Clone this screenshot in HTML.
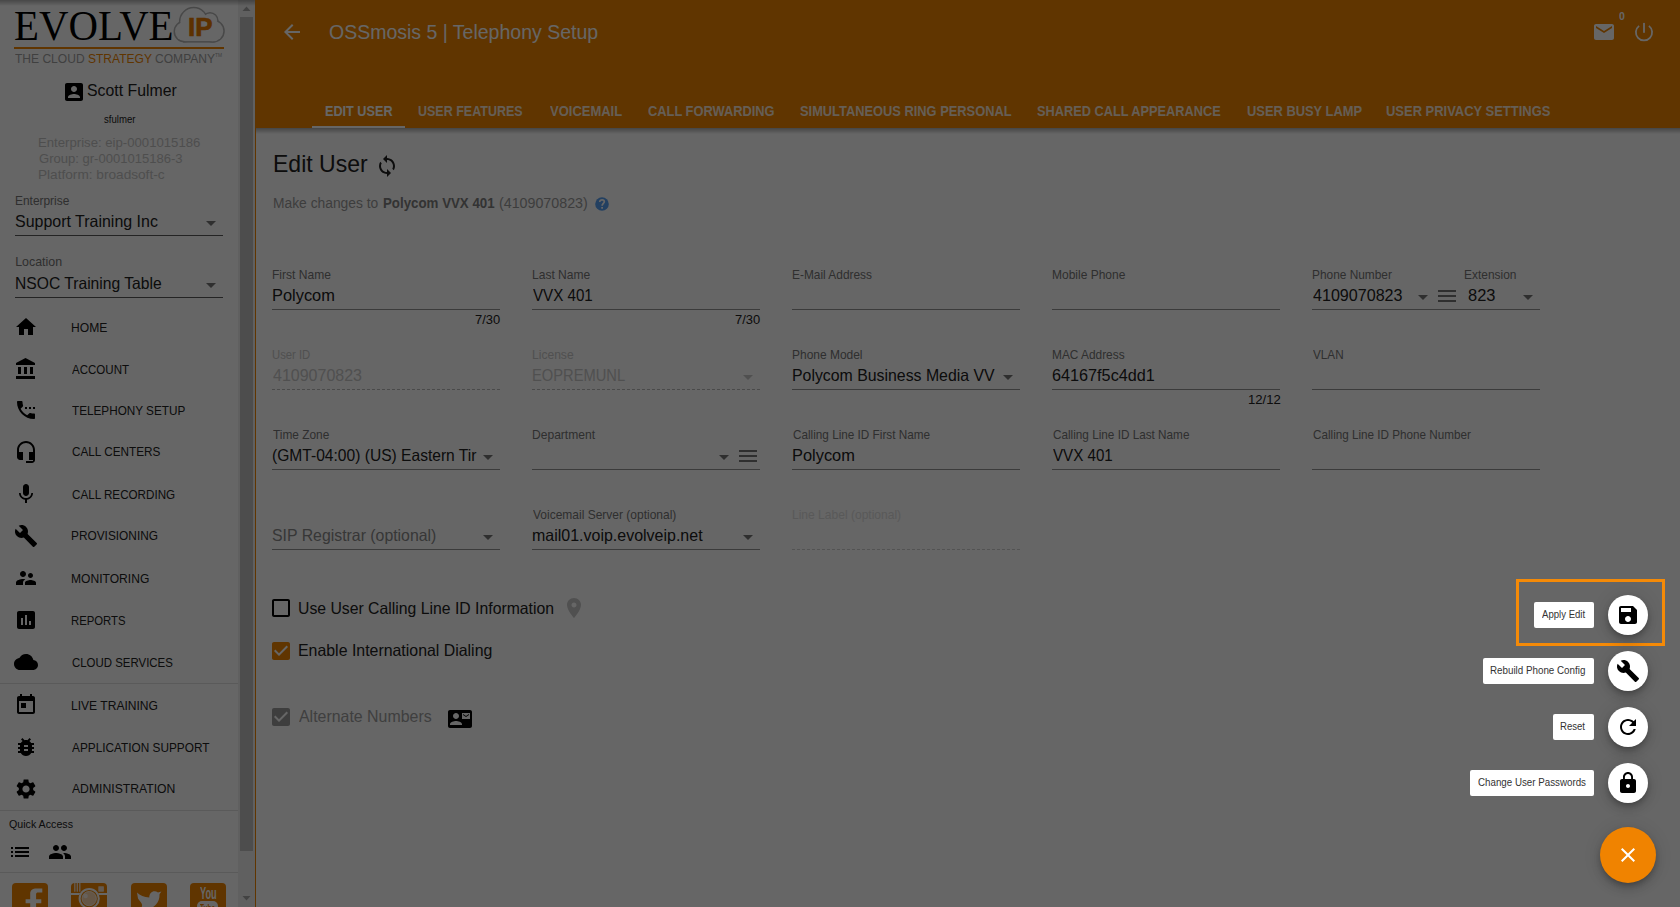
<!DOCTYPE html>
<html><head><meta charset="utf-8"><style>
html,body{margin:0;padding:0;width:1680px;height:907px;overflow:hidden;background:#fff;font-family:"Liberation Sans",sans-serif;}
.t{position:absolute;white-space:nowrap;line-height:1;transform-origin:0 0;}
.r{position:absolute;}
.i{position:absolute;overflow:visible;}
</style></head><body>
<div class="r" style="left:0px;top:0px;width:1680px;height:907px;background:#fff;"></div>
<div class="r" style="left:255px;top:0px;width:1425px;height:128px;background:#f08400;"></div>
<div class="r" style="left:256px;top:128px;width:1424px;height:6px;background:linear-gradient(rgba(0,0,0,.32),rgba(0,0,0,0));"></div>
<div class="r" style="left:255px;top:128px;width:1px;height:779px;background:#f08400;"></div>
<div class="r" style="left:238px;top:0px;width:17px;height:907px;background:#f1f1f1;"></div>
<div class="r" style="left:240px;top:17px;width:13px;height:834px;background:#c1c1c1;"></div>
<svg class="i" style="left:238px;top:0;width:17px;height:17px" viewBox="0 0 17 17"><path d="M4.5 11h8L8.5 6.5z" fill="#a8a8a8"/></svg>
<div class="r" style="left:0px;top:0px;width:255px;height:6px;background:linear-gradient(rgba(0,0,0,.3),rgba(0,0,0,0));"></div>
<svg class="i" style="left:238px;top:890px;width:17px;height:17px" viewBox="0 0 17 17"><path d="M4.5 6h8L8.5 10.5z" fill="#a8a8a8"/></svg>
<div class="t" style="left:13.57px;top:5.41px;font-size:42.5px;color:#000;font-family:'Liberation Serif',serif;transform:scaleX(0.9609);">EVOLVE</div>
<svg class="i" style="left:0;top:0;width:240px;height:50px" viewBox="0 0 240 50"><g fill="#b4b4b4" stroke="#b4b4b4" stroke-width="3"><circle cx="184.5" cy="31.5" r="9.5"/><circle cx="193.7" cy="21.6" r="13.3"/><circle cx="210" cy="20.6" r="7.1"/><circle cx="213" cy="31" r="10.3"/><rect x="184.5" y="24" width="28.5" height="17.1"/></g><g fill="#fff"><circle cx="184.5" cy="31.5" r="9.5"/><circle cx="193.7" cy="21.6" r="13.3"/><circle cx="210" cy="20.6" r="7.1"/><circle cx="213" cy="31" r="10.3"/><rect x="184.5" y="24" width="28.5" height="17.1"/></g></svg>
<div class="t" style="left:188.42px;top:14.46px;font-size:26.5px;color:#e87a00;font-weight:bold;transform:scaleX(0.9767);-webkit-text-stroke:.7px #e87a00;">IP</div>
<div class="r" style="left:14px;top:46.5px;width:210px;height:2.2px;background:#f08400;"></div>
<div class="t" style="left:14.76px;top:53.22px;font-size:12.5px;color:#a0a0a0;transform:scaleX(0.9632);"><span>THE CLOUD </span><span style="color:#f08400">STRATEGY</span><span> COMPANY</span><span style="font-size:5px;vertical-align:6px">TM</span></div>
<svg class="i" style="left:62px;top:80px;width:24px;height:24px;" viewBox="0 0 24 24"><path fill="#000" d="M3 5v14c0 1.1.89 2 2 2h14c1.1 0 2-.9 2-2V5c0-1.1-.9-2-2-2H5c-1.11 0-2 .9-2 2zm12 4c0 1.66-1.34 3-3 3s-3-1.34-3-3 1.34-3 3-3 3 1.34 3 3zm-9 8c0-2 4-3.1 6-3.1s6 1.1 6 3.1v1H6v-1z"/></svg>
<div class="t" style="left:86.59px;top:81.83px;font-size:16.5px;color:#212121;transform:scaleX(0.9591);">Scott Fulmer</div>
<div class="t" style="left:103.51px;top:115.19px;font-size:10.4px;color:#212121;transform:scaleX(0.9228);">sfulmer</div>
<div class="t" style="left:38.15px;top:137.10px;font-size:12.4px;color:#c4c4c4;transform:scaleX(1.0618);">Enterprise: eip-0001015186</div>
<div class="t" style="left:38.55px;top:153.30px;font-size:12.4px;color:#c4c4c4;transform:scaleX(1.0529);">Group: gr-0001015186-3</div>
<div class="t" style="left:38.11px;top:169.20px;font-size:12.4px;color:#c4c4c4;transform:scaleX(1.1005);">Platform: broadsoft-c</div>
<div class="t" style="left:15.25px;top:194.50px;font-size:12.4px;color:#757575;transform:scaleX(0.9612);">Enterprise</div>
<div class="t" style="left:15.48px;top:213.13px;font-size:16.5px;color:#212121;transform:scaleX(0.9678);">Support Training Inc</div>
<svg class="i" style="left:199px;top:211px;width:24px;height:24px;" viewBox="0 0 24 24"><path fill="#757575" d="M7 10l5 5 5-5z"/></svg>
<div class="r" style="left:15px;top:235px;width:208px;height:1px;background:#5a5a5a;"></div>
<div class="t" style="left:15.21px;top:256.40px;font-size:12.4px;color:#757575;">Location</div>
<div class="t" style="left:14.95px;top:275.03px;font-size:16.5px;color:#212121;transform:scaleX(0.9481);">NSOC Training Table</div>
<svg class="i" style="left:199px;top:273px;width:24px;height:24px;" viewBox="0 0 24 24"><path fill="#757575" d="M7 10l5 5 5-5z"/></svg>
<div class="r" style="left:15px;top:296.5px;width:208px;height:1px;background:#5a5a5a;"></div>
<svg class="i" style="left:14px;top:315px;width:24px;height:24px;" viewBox="0 0 24 24"><path fill="#000" d="M10 20v-6h4v6h5v-8h3L12 3 2 12h3v8z"/></svg>
<div class="t" style="left:71.23px;top:321.50px;font-size:12.4px;color:#212121;transform:scaleX(0.9773);">HOME</div>
<svg class="i" style="left:14px;top:357.1px;width:24px;height:24px;" viewBox="0 0 24 24"><path fill="#000" d="M4 10v7h3v-7H4zm6 0v7h3v-7h-3zM2 22h19v-3H2v3zm14-12v7h3v-7h-3zm-4.5-9L2 6v2h19V6l-9.5-5z"/></svg>
<div class="t" style="left:72.20px;top:363.60px;font-size:12.4px;color:#212121;transform:scaleX(0.9317);">ACCOUNT</div>
<svg class="i" style="left:14px;top:398.1px;width:24px;height:24px;" viewBox="0 0 24 24"><path fill="#000" d="M11 9h2v2h-2zm4 0h2v2h-2zm5 6.5c-1.25 0-2.45-.2-3.57-.57-.35-.11-.74-.03-1.02.24l-2.2 2.2c-2.83-1.44-5.15-3.75-6.59-6.58l2.2-2.21c.28-.27.36-.66.25-1.01C8.7 6.45 8.5 5.25 8.5 4c0-.55-.45-1-1-1H4c-.55 0-1 .45-1 1 0 9.39 7.61 17 17 17 .55 0 1-.45 1-1v-3.5c0-.55-.45-1-1-1zM19 9v2h2V9h-2z"/></svg>
<div class="t" style="left:71.97px;top:404.60px;font-size:12.4px;color:#212121;transform:scaleX(0.9470);">TELEPHONY SETUP</div>
<svg class="i" style="left:14px;top:439.9px;width:24px;height:24px;" viewBox="0 0 24 24"><path fill="#000" d="M12 1c-4.97 0-9 4.03-9 9v7c0 1.66 1.34 3 3 3h3v-8H5v-2c0-3.87 3.13-7 7-7s7 3.13 7 7v2h-4v8h4v1h-7v2h6c1.66 0 3-1.34 3-3V10c0-4.97-4.03-9-9-9z"/></svg>
<div class="t" style="left:71.61px;top:446.40px;font-size:12.4px;color:#212121;transform:scaleX(0.9482);">CALL CENTERS</div>
<svg class="i" style="left:14px;top:482px;width:24px;height:24px;" viewBox="0 0 24 24"><path fill="#000" d="M12 14c1.66 0 2.99-1.34 2.99-3L15 5c0-1.66-1.34-3-3-3S9 3.34 9 5v6c0 1.66 1.34 3 3 3zm5.3-3c0 3-2.54 5.1-5.3 5.1S6.7 14 6.7 11H5c0 3.41 2.72 6.23 6 6.72V21h2v-3.28c3.28-.48 6-3.3 6-6.72h-1.7z"/></svg>
<div class="t" style="left:71.62px;top:488.50px;font-size:12.4px;color:#212121;transform:scaleX(0.9404);">CALL RECORDING</div>
<svg class="i" style="left:14px;top:523.8px;width:24px;height:24px;" viewBox="0 0 24 24"><path fill="#000" d="M22.7 19l-9.1-9.1c.9-2.3.4-5-1.5-6.9-2-2-5-2.4-7.4-1.3L9 6 6 9 1.6 4.7C.4 7.1.9 10.1 2.9 12.1c1.9 1.9 4.6 2.4 6.9 1.5l9.1 9.1c.4.4 1 .4 1.4 0l2.3-2.3c.5-.4.5-1.1.1-1.4z"/></svg>
<div class="t" style="left:71.25px;top:530.30px;font-size:12.4px;color:#212121;transform:scaleX(0.9570);">PROVISIONING</div>
<svg class="i" style="left:14px;top:566.2px;width:24px;height:24px;" viewBox="0 0 24 24"><path fill="#000" d="M16.5 12c1.38 0 2.49-1.12 2.49-2.5S17.88 7 16.5 7C15.12 7 14 8.12 14 9.5s1.12 2.5 2.5 2.5zM9 11c1.66 0 2.99-1.34 2.99-3S10.66 5 9 5C7.34 5 6 6.34 6 8s1.34 3 3 3zm7.5 3c-1.83 0-5.5.92-5.5 2.75V19h11v-2.25c0-1.83-3.670-2.75-5.5-2.75zM9 13c-2.33 0-7 1.17-7 3.5V19h7v-2.25c0-.85.33-2.34 2.37-3.47C10.5 13.1 9.66 13 9 13z"/></svg>
<div class="t" style="left:71.23px;top:572.70px;font-size:12.4px;color:#212121;transform:scaleX(0.9746);">MONITORING</div>
<svg class="i" style="left:14px;top:608px;width:24px;height:24px;" viewBox="0 0 24 24"><path fill="#000" d="M19 3H5c-1.1 0-2 .9-2 2v14c0 1.1.9 2 2 2h14c1.1 0 2-.9 2-2V5c0-1.1-.9-2-2-2zM9 17H7v-7h2v7zm4 0h-2V7h2v10zm4 0h-2v-4h2v4z"/></svg>
<div class="t" style="left:71.29px;top:614.50px;font-size:12.4px;color:#212121;transform:scaleX(0.9148);">REPORTS</div>
<svg class="i" style="left:14px;top:650px;width:24px;height:24px;" viewBox="0 0 24 24"><path fill="#000" d="M19.35 10.04C18.67 6.59 15.64 4 12 4 9.11 4 6.6 5.64 5.35 8.04 2.34 8.36 0 10.91 0 14c0 3.310 2.69 6 6 6h13c2.76 0 5-2.24 5-5 0-2.64-2.05-4.78-4.65-4.96z"/></svg>
<div class="t" style="left:71.63px;top:656.50px;font-size:12.4px;color:#212121;transform:scaleX(0.9230);">CLOUD SERVICES</div>
<svg class="i" style="left:14px;top:693.2px;width:24px;height:24px;" viewBox="0 0 24 24"><path fill="#000" d="M19 3h-1V1h-2v2H8V1H6v2H5c-1.11 0-1.99.9-1.99 2L3 19c0 1.1.89 2 2 2h14c1.1 0 2-.9 2-2V5c0-1.1-.9-2-2-2zm0 16H5V8h14v11zM7 10h5v5H7z"/></svg>
<div class="t" style="left:71.23px;top:699.70px;font-size:12.4px;color:#212121;transform:scaleX(0.9739);">LIVE TRAINING</div>
<svg class="i" style="left:14px;top:735px;width:24px;height:24px;" viewBox="0 0 24 24"><path fill="#000" d="M20 8h-2.81c-.45-.78-1.07-1.45-1.82-1.96L17 4.41 15.59 3l-2.170 2.17C12.96 5.06 12.49 5 12 5c-.49 0-.96.06-1.41.17L8.41 3 7 4.41l1.62 1.63C7.88 6.55 7.26 7.22 6.81 8H4v2h2.09c-.05.33-.09.66-.09 1v1H4v2h2v1c0 .34.04.67.09 1H4v2h2.81c1.04 1.79 2.97 3 5.19 3s4.15-1.21 5.19-3H20v-2h-2.09c.05-.33.09-.66.09-1v-1h2v-2h-2v-1c0-.34-.04-.67-.09-1H20V8zm-6 8h-4v-2h4v2zm0-4h-4v-2h4v2z"/></svg>
<div class="t" style="left:72.20px;top:741.50px;font-size:12.4px;color:#212121;transform:scaleX(0.9537);">APPLICATION SUPPORT</div>
<svg class="i" style="left:14px;top:776.6px;width:24px;height:24px;" viewBox="0 0 24 24"><path fill="#000" d="M19.14 12.94c.04-.3.06-.61.06-.94 0-.32-.02-.64-.07-.94l2.03-1.58c.18-.14.23-.41.12-.61l-1.92-3.32c-.12-.22-.37-.29-.59-.22l-2.39.96c-.5-.38-1.03-.7-1.62-.94l-.36-2.54c-.04-.24-.24-.41-.48-.41h-3.84c-.24 0-.43.17-.47.41l-.36 2.54c-.59.24-1.13.57-1.62.94l-2.39-.96c-.22-.08-.47 0-.59.22L2.74 8.87c-.12.21-.08.47.12.61l2.03 1.58c-.05.3-.09.63-.09.94s.02.64.07.94l-2.03 1.58c-.18.14-.23.41-.12.61l1.92 3.32c.12.22.37.29.59.22l2.39-.96c.5.38 1.03.7 1.62.94l.36 2.54c.05.24.24.41.48.41h3.84c.24 0 .44-.17.47-.41l.36-2.54c.59-.24 1.13-.56 1.62-.94l2.39.96c.22.08.47 0 .59-.22l1.920-3.32c.12-.22.07-.47-.12-.61l-2.01-1.58zM12 15.6c-1.98 0-3.6-1.62-3.6-3.6s1.62-3.6 3.6-3.6 3.6 1.62 3.6 3.6-1.62 3.6-3.6 3.6z"/></svg>
<div class="t" style="left:72.20px;top:783.10px;font-size:12.4px;color:#212121;transform:scaleX(0.9831);">ADMINISTRATION</div>
<div class="r" style="left:0px;top:683px;width:238px;height:1px;background:#e0e0e0;"></div>
<div class="r" style="left:0px;top:810px;width:238px;height:1px;background:#e0e0e0;"></div>
<div class="t" style="left:8.52px;top:819.43px;font-size:11.3px;color:#212121;transform:scaleX(0.9433);">Quick Access</div>
<svg class="i" style="left:8px;top:840px;width:24px;height:24px;" viewBox="0 0 24 24"><path fill="#000" d="M3 13h2v-2H3v2zm0 4h2v-2H3v2zm0-8h2V7H3v2zm4 4h14v-2H7v2zm0 4h14v-2H7v2zM7 7v2h14V7H7z"/></svg>
<svg class="i" style="left:48px;top:840px;width:24px;height:24px;" viewBox="0 0 24 24"><path fill="#000" d="M16 11c1.66 0 2.99-1.34 2.99-3S17.66 5 16 5c-1.66 0-3 1.34-3 3s1.34 3 3 3zm-8 0c1.66 0 2.99-1.34 2.99-3S9.66 5 8 5C6.34 5 5 6.34 5 8s1.34 3 3 3zm0 2c-2.33 0-7 1.17-7 3.5V19h14v-2.5c0-2.33-4.67-3.5-7-3.5zm8 0c-.29 0-.62.02-.97.05 1.16.84 1.97 1.97 1.97 3.45V19h6v-2.5c0-2.33-4.67-3.5-7-3.5z"/></svg>
<div class="r" style="left:0px;top:872px;width:238px;height:1px;background:#e0e0e0;"></div>
<div class="r" style="left:12px;top:883px;width:36px;height:30px;background:#f08400;border-radius:4px"></div>
<div class="r" style="left:71px;top:883px;width:36px;height:30px;background:#f08400;border-radius:4px"></div>
<div class="r" style="left:131px;top:883px;width:36px;height:30px;background:#f08400;border-radius:4px"></div>
<div class="r" style="left:190px;top:883px;width:36px;height:30px;background:#f08400;border-radius:4px"></div>
<svg class="i" style="left:12px;top:883px;width:36px;height:24px" viewBox="0 0 36 24"><path d="M18.2 30 V20.2 H13.6 V16.3 H18.2 V11 C18.2 7 20.5 5.5 24.5 5.5 H30.3 V9.4 H26 C24.8 9.4 24.1 10 24.1 11.2 V16.3 H29.3 V20.2 H24.1 V30 Z" fill="#fff"/></svg>
<svg class="i" style="left:71px;top:883px;width:36px;height:24px" viewBox="0 0 36 24"><g fill="#f6e2cc"><rect x="3.1" y="0" width="1.4" height="8.7"/><rect x="5.6" y="0" width="1.4" height="8.7"/><rect x="8.1" y="0" width="1.4" height="8.7"/><rect x="27.3" y="3.2" width="5.6" height="5.5" rx="0.6"/></g><rect x="0" y="10" width="36" height="2" fill="#fff"/><circle cx="18.2" cy="15.6" r="10.6" fill="#f08400"/><circle cx="18.2" cy="15.6" r="9.6" fill="none" stroke="#fff" stroke-width="2"/><circle cx="18.2" cy="15.6" r="7.2" fill="#fcd8b0" stroke="#fff" stroke-width="0.8"/><circle cx="14.6" cy="13" r="2.2" fill="#fff" opacity=".7"/></svg>
<svg class="i" style="left:131px;top:883px;width:36px;height:24px" viewBox="0 0 36 24"><path d="M6 9.4 C9 12.5 13 14.2 18.3 14.4 C18.2 9.2 23 6.5 27 9.5 L30.4 8.4 L28.5 11.2 C29 20 22 28 9 26 C14 22 9 19 7 15.5 Z" fill="#fff"/></svg>
<div class="t" style="left:199.62px;top:884.91px;font-size:17px;color:#fff;font-weight:bold;transform:scaleX(0.5406);">You</div>
<div class="r" style="left:197.4px;top:901px;width:20.6px;height:12px;background:#fff;border-radius:5px"></div>
<div class="t" style="left:200.24px;top:902.69px;font-size:11px;color:#f08400;font-weight:bold;transform:scaleX(0.5887);">Tube</div>
<svg class="i" style="left:280px;top:20px;width:24px;height:24px;" viewBox="0 0 24 24"><path fill="#fff" d="M20 11H7.83l5.59-5.59L12 4l-8 8 8 8 1.41-1.41L7.83 13H20v-2z"/></svg>
<div class="t" style="left:328.67px;top:21.76px;font-size:20.6px;color:#fff;transform:scaleX(0.9465);">OSSmosis 5 | Telephony Setup</div>
<div class="t" style="left:324.88px;top:103.52px;font-size:14.5px;color:#fff;font-weight:bold;transform:scaleX(0.8731);">EDIT USER</div>
<div class="t" style="left:417.85px;top:103.52px;font-size:14.5px;color:rgba(255,255,255,.85);font-weight:bold;transform:scaleX(0.8618);">USER FEATURES</div>
<div class="t" style="left:550.04px;top:103.52px;font-size:14.5px;color:rgba(255,255,255,.85);font-weight:bold;transform:scaleX(0.8958);">VOICEMAIL</div>
<div class="t" style="left:647.79px;top:103.52px;font-size:14.5px;color:rgba(255,255,255,.85);font-weight:bold;transform:scaleX(0.8863);">CALL FORWARDING</div>
<div class="t" style="left:800.21px;top:103.52px;font-size:14.5px;color:rgba(255,255,255,.85);font-weight:bold;transform:scaleX(0.8862);">SIMULTANEOUS RING PERSONAL</div>
<div class="t" style="left:1037.02px;top:103.52px;font-size:14.5px;color:rgba(255,255,255,.85);font-weight:bold;transform:scaleX(0.8805);">SHARED CALL APPEARANCE</div>
<div class="t" style="left:1247.03px;top:103.52px;font-size:14.5px;color:rgba(255,255,255,.85);font-weight:bold;transform:scaleX(0.8891);">USER BUSY LAMP</div>
<div class="t" style="left:1386.32px;top:103.52px;font-size:14.5px;color:rgba(255,255,255,.85);font-weight:bold;transform:scaleX(0.8934);">USER PRIVACY SETTINGS</div>
<div class="r" style="left:312px;top:126px;width:93px;height:2px;background:#fff;"></div>
<svg class="i" style="left:1592px;top:20px;width:24px;height:24px;" viewBox="0 0 24 24"><path fill="#fff" d="M20 4H4c-1.1 0-1.99.9-1.99 2L2 18c0 1.1.9 2 2 2h16c1.1 0 2-.9 2-2V6c0-1.1-.9-2-2-2zm0 4l-8 5-8-5V6l8 5 8-5v2z"/></svg>
<div class="t" style="left:1619.48px;top:10.69px;font-size:11px;color:#fff;font-weight:bold;transform:scaleX(0.9569);">0</div>
<svg class="i" style="left:1632px;top:20px;width:24px;height:24px" viewBox="0 0 24 24"><path d="M7.1 5.9 A8.1 8.1 0 1 0 16.9 5.9" fill="none" stroke="#fff" stroke-width="1.8"/><rect x="11.1" y="2.9" width="1.8" height="9.9" fill="#fff"/></svg>
<div class="t" style="left:272.96px;top:152.96px;font-size:23.2px;color:#212121;transform:scaleX(0.9920);">Edit User</div>
<svg class="i" style="left:375px;top:154px;width:24px;height:24px;" viewBox="0 0 24 24"><path fill="#212121" d="M12 4V1L8 5l4 4V6c3.31 0 6 2.69 6 6 0 1.01-.25 1.97-.7 2.8l1.46 1.46C19.54 15.03 20 13.57 20 12c0-4.42-3.58-8-8-8zm0 14c-3.31 0-6-2.69-6-6 0-1.01.25-1.97.7-2.8L5.24 7.74C4.46 8.97 4 10.43 4 12c0 4.42 3.58 8 8 8v3l4-4-4-4v3z"/></svg>
<div class="t" style="left:273.19px;top:195.08px;font-size:15.5px;color:#9a9a9a;transform:scaleX(0.8918);">Make changes to</div>
<div class="t" style="left:382.54px;top:195.08px;font-size:15.5px;color:#808080;font-weight:bold;transform:scaleX(0.8581);">Polycom VVX 401</div>
<div class="t" style="left:498.54px;top:195.08px;font-size:15.5px;color:#9a9a9a;transform:scaleX(0.9194);">(4109070823)</div>
<svg class="i" style="left:595px;top:197px;width:14px;height:14px" viewBox="0 0 14 14"><circle cx="7" cy="7" r="6.8" fill="#58a0f2"/><path d="M4.7 5.1 C4.7 3.5 5.8 2.8 7.1 2.8 C8.4 2.8 9.3 3.6 9.3 4.8 C9.3 6.3 7.1 6.5 7.1 8.7" fill="none" stroke="#fff" stroke-width="1.7"/><rect x="6.2" y="10" width="1.8" height="1.7" fill="#fff"/></svg>
<div class="t" style="left:272.24px;top:268.70px;font-size:12.4px;color:#757575;transform:scaleX(0.9715);">First Name</div>
<div class="t" style="left:271.89px;top:287.23px;font-size:16.5px;color:#212121;transform:scaleX(0.9937);">Polycom</div>
<div class="r" style="left:272px;top:308.5px;width:228px;height:1px;background:#949494;"></div>
<div class="t" style="left:475.25px;top:313.50px;font-size:12.4px;color:#212121;transform:scaleX(1.0449);">7/30</div>
<div class="t" style="left:532.24px;top:268.70px;font-size:12.4px;color:#757575;transform:scaleX(0.9725);">Last Name</div>
<div class="t" style="left:533.12px;top:287.23px;font-size:16.5px;color:#212121;transform:scaleX(0.9180);">VVX 401</div>
<div class="r" style="left:532px;top:308.5px;width:228px;height:1px;background:#949494;"></div>
<div class="t" style="left:735.25px;top:313.50px;font-size:12.4px;color:#212121;transform:scaleX(1.0449);">7/30</div>
<div class="t" style="left:792.25px;top:268.70px;font-size:12.4px;color:#757575;transform:scaleX(0.9602);">E-Mail Address</div>
<div class="r" style="left:792px;top:308.5px;width:228px;height:1px;background:#949494;"></div>
<div class="t" style="left:1052.24px;top:268.70px;font-size:12.4px;color:#757575;transform:scaleX(0.9680);">Mobile Phone</div>
<div class="r" style="left:1052px;top:308.5px;width:228px;height:1px;background:#949494;"></div>
<div class="t" style="left:1312.25px;top:268.70px;font-size:12.4px;color:#757575;transform:scaleX(0.9585);">Phone Number</div>
<div class="t" style="left:1464.24px;top:268.70px;font-size:12.4px;color:#757575;transform:scaleX(0.9632);">Extension</div>
<div class="t" style="left:1312.88px;top:286.83px;font-size:16.5px;color:#212121;transform:scaleX(0.9752);">4109070823</div>
<svg class="i" style="left:1411px;top:285px;width:24px;height:24px;" viewBox="0 0 24 24"><path fill="#757575" d="M7 10l5 5 5-5z"/></svg>
<svg class="i" style="left:1434.7px;top:284.3px;width:24px;height:24px;" viewBox="0 0 24 24"><path fill="#757575" d="M3 18h18v-2H3v2zm0-5h18v-2H3v2zm0-7v2h18V6H3z"/></svg>
<div class="t" style="left:1468.06px;top:286.83px;font-size:16.5px;color:#212121;transform:scaleX(0.9973);">823</div>
<svg class="i" style="left:1516px;top:285px;width:24px;height:24px;" viewBox="0 0 24 24"><path fill="#757575" d="M7 10l5 5 5-5z"/></svg>
<div class="r" style="left:1312px;top:308.5px;width:228px;height:1px;background:#949494;"></div>
<div class="t" style="left:272.35px;top:348.50px;font-size:12.4px;color:#c8c8c8;transform:scaleX(0.9114);">User ID</div>
<div class="t" style="left:272.88px;top:366.83px;font-size:16.5px;color:#c8c8c8;transform:scaleX(0.9697);">4109070823</div>
<div class="r" style="left:272px;top:388.5px;width:228px;height:1px;background:repeating-linear-gradient(90deg,#b8b8b8 0 3px,transparent 3px 5px);"></div>
<div class="t" style="left:532.23px;top:348.50px;font-size:12.4px;color:#c8c8c8;transform:scaleX(0.9741);">License</div>
<div class="t" style="left:532.02px;top:366.83px;font-size:16.5px;color:#c8c8c8;transform:scaleX(0.8908);">EOPREMUNL</div>
<div class="r" style="left:532px;top:388.5px;width:228px;height:1px;background:repeating-linear-gradient(90deg,#b8b8b8 0 3px,transparent 3px 5px);"></div>
<svg class="i" style="left:736px;top:365px;width:24px;height:24px;" viewBox="0 0 24 24"><path fill="#c8c8c8" d="M7 10l5 5 5-5z"/></svg>
<div class="t" style="left:792.24px;top:348.50px;font-size:12.4px;color:#757575;transform:scaleX(0.9658);">Phone Model</div>
<div class="t" style="left:791.93px;top:366.83px;font-size:16.5px;color:#212121;transform:scaleX(0.9605);">Polycom Business Media VV</div>
<div class="r" style="left:792px;top:388.5px;width:228px;height:1px;background:#949494;"></div>
<svg class="i" style="left:996px;top:365px;width:24px;height:24px;" viewBox="0 0 24 24"><path fill="#757575" d="M7 10l5 5 5-5z"/></svg>
<div class="t" style="left:1052.25px;top:348.50px;font-size:12.4px;color:#757575;transform:scaleX(0.9583);">MAC Address</div>
<div class="t" style="left:1052.39px;top:366.83px;font-size:16.5px;color:#212121;transform:scaleX(0.9831);">64167f5c4dd1</div>
<div class="r" style="left:1052px;top:388.5px;width:228px;height:1px;background:#949494;"></div>
<div class="t" style="left:1247.81px;top:393.80px;font-size:12.4px;color:#212121;transform:scaleX(1.0594);">12/12</div>
<div class="t" style="left:1313.14px;top:348.50px;font-size:12.4px;color:#757575;transform:scaleX(0.9454);">VLAN</div>
<div class="r" style="left:1312px;top:388.5px;width:228px;height:1px;background:#949494;"></div>
<div class="t" style="left:272.96px;top:428.70px;font-size:12.4px;color:#757575;transform:scaleX(0.9574);">Time Zone</div>
<div class="t" style="left:272.26px;top:446.93px;font-size:16.5px;color:#212121;transform:scaleX(0.9448);">(GMT-04:00) (US) Eastern Tir</div>
<div class="r" style="left:272px;top:468.5px;width:228px;height:1px;background:#949494;"></div>
<svg class="i" style="left:476px;top:445px;width:24px;height:24px;" viewBox="0 0 24 24"><path fill="#757575" d="M7 10l5 5 5-5z"/></svg>
<div class="t" style="left:532.23px;top:428.70px;font-size:12.4px;color:#757575;transform:scaleX(0.9737);">Department</div>
<div class="r" style="left:532px;top:468.5px;width:228px;height:1px;background:#949494;"></div>
<svg class="i" style="left:712px;top:445px;width:24px;height:24px;" viewBox="0 0 24 24"><path fill="#757575" d="M7 10l5 5 5-5z"/></svg>
<svg class="i" style="left:735.8px;top:444.2px;width:24px;height:24px;" viewBox="0 0 24 24"><path fill="#757575" d="M3 18h18v-2H3v2zm0-5h18v-2H3v2zm0-7v2h18V6H3z"/></svg>
<div class="t" style="left:792.61px;top:428.70px;font-size:12.4px;color:#757575;transform:scaleX(0.9475);">Calling Line ID First Name</div>
<div class="t" style="left:791.89px;top:446.93px;font-size:16.5px;color:#212121;transform:scaleX(0.9937);">Polycom</div>
<div class="r" style="left:792px;top:468.5px;width:228px;height:1px;background:#949494;"></div>
<div class="t" style="left:1052.61px;top:428.70px;font-size:12.4px;color:#757575;transform:scaleX(0.9479);">Calling Line ID Last Name</div>
<div class="t" style="left:1053.12px;top:446.93px;font-size:16.5px;color:#212121;transform:scaleX(0.9180);">VVX 401</div>
<div class="r" style="left:1052px;top:468.5px;width:228px;height:1px;background:#949494;"></div>
<div class="t" style="left:1312.62px;top:428.70px;font-size:12.4px;color:#757575;transform:scaleX(0.9433);">Calling Line ID Phone Number</div>
<div class="r" style="left:1312px;top:468.5px;width:228px;height:1px;background:#949494;"></div>
<div class="t" style="left:272.49px;top:526.53px;font-size:16.5px;color:#8a8a8a;transform:scaleX(0.9600);">SIP Registrar (optional)</div>
<svg class="i" style="left:476px;top:525px;width:24px;height:24px;" viewBox="0 0 24 24"><path fill="#757575" d="M7 10l5 5 5-5z"/></svg>
<div class="r" style="left:272px;top:548.5px;width:228px;height:1px;background:#949494;"></div>
<div class="t" style="left:533.14px;top:508.50px;font-size:12.4px;color:#757575;transform:scaleX(0.9680);">Voicemail Server (optional)</div>
<div class="t" style="left:532.16px;top:527.23px;font-size:16.5px;color:#212121;transform:scaleX(0.9686);">mail01.voip.evolveip.net</div>
<div class="r" style="left:532px;top:548.5px;width:228px;height:1px;background:#949494;"></div>
<svg class="i" style="left:736px;top:525px;width:24px;height:24px;" viewBox="0 0 24 24"><path fill="#757575" d="M7 10l5 5 5-5z"/></svg>
<div class="t" style="left:792.24px;top:508.50px;font-size:12.4px;color:#dedede;transform:scaleX(0.9719);">Line Label (optional)</div>
<div class="r" style="left:792px;top:548.5px;width:228px;height:1px;background:repeating-linear-gradient(90deg,#cfcfcf 0 3px,transparent 3px 5px);"></div>
<svg class="i" style="left:269px;top:596px;width:24px;height:24px;" viewBox="0 0 24 24"><path fill="#000" d="M19 5v14H5V5h14m0-2H5c-1.1 0-2 .9-2 2v14c0 1.1.9 2 2 2h14c1.1 0 2-.9 2-2V5c0-1.1-.9-2-2-2z"/></svg>
<div class="t" style="left:298.12px;top:600.33px;font-size:16.5px;color:#212121;transform:scaleX(0.9560);">Use User Calling Line ID Information</div>
<svg class="i" style="left:562px;top:596px;width:24px;height:24px;" viewBox="0 0 24 24"><path fill="#c8c8c8" d="M12 2C8.13 2 5 5.13 5 9c0 5.25 7 13 7 13s7-7.75 7-13c0-3.87-3.13-7-7-7zm0 9.5c-1.38 0-2.5-1.12-2.5-2.5s1.12-2.5 2.5-2.5 2.5 1.12 2.5 2.5-1.12 2.5-2.5 2.5z"/></svg>
<svg class="i" style="left:269px;top:639px;width:24px;height:24px;" viewBox="0 0 24 24"><path fill="#f08400" d="M19 3H5c-1.11 0-2 .9-2 2v14c0 1.1.89 2 2 2h14c1.11 0 2-.9 2-2V5c0-1.1-.89-2-2-2zm-9 14l-5-5 1.41-1.41L10 14.17l7.59-7.59L19 8l-9 9z"/></svg>
<div class="t" style="left:298.03px;top:641.83px;font-size:16.5px;color:#212121;transform:scaleX(0.9629);">Enable International Dialing</div>
<svg class="i" style="left:269px;top:705px;width:24px;height:24px;" viewBox="0 0 24 24"><path fill="#9c9c9c" d="M19 3H5c-1.11 0-2 .9-2 2v14c0 1.1.89 2 2 2h14c1.11 0 2-.9 2-2V5c0-1.1-.89-2-2-2zm-9 14l-5-5 1.41-1.41L10 14.17l7.59-7.59L19 8l-9 9z"/></svg>
<div class="t" style="left:299.30px;top:707.63px;font-size:16.5px;color:#9e9e9e;transform:scaleX(0.9646);">Alternate Numbers</div>
<svg class="i" style="left:448px;top:707px;width:24px;height:24px;" viewBox="0 0 24 24"><path fill="#000" d="M21 8V7l-3 2-3-2v1l3 2 3-2zm1-5H2C.9 3 0 3.9 0 5v14c0 1.1.9 2 2 2h20c1.1 0 1.99-.9 1.99-2L24 5c0-1.1-.9-2-2-2zM8 6c1.66 0 3 1.34 3 3s-1.34 3-3 3-3-1.34-3-3 1.34-3 3-3zm6 12H2v-1c0-2 4-3.1 6-3.1s6 1.1 6 3.1v1zm8-6h-8V6h8v6z"/></svg>
<div class="r" style="left:0px;top:0px;width:1680px;height:907px;background:rgba(0,0,0,.6);"></div>
<div class="r" style="left:1516px;top:579px;width:149px;height:67px;background:transparent;border:3px solid #f58a07;box-sizing:border-box"></div>
<div class="r" style="left:1608px;top:595px;width:40px;height:40px;border-radius:50%;background:#fff;box-shadow:0 3px 5px -1px rgba(0,0,0,.2),0 6px 10px 0 rgba(0,0,0,.14),0 1px 18px 0 rgba(0,0,0,.12)"></div>
<svg class="i" style="left:1616px;top:603px;width:24px;height:24px;" viewBox="0 0 24 24"><path fill="#000" d="M17 3H5c-1.11 0-2 .9-2 2v14c0 1.1.89 2 2 2h14c1.1 0 2-.9 2-2V7l-4-4zm-5 16c-1.66 0-3-1.34-3-3s1.34-3 3-3 3 1.34 3 3-1.34 3-3 3zm3-10H5V5h10v4z"/></svg>
<div class="r" style="left:1534px;top:602px;width:60px;height:26px;background:#fff;border-radius:2px"></div>
<div class="t" style="left:1542.00px;top:610.28px;font-size:10.3px;color:#333;transform:scaleX(0.9309);">Apply Edit</div>
<div class="r" style="left:1608px;top:651px;width:40px;height:40px;border-radius:50%;background:#fff;box-shadow:0 3px 5px -1px rgba(0,0,0,.2),0 6px 10px 0 rgba(0,0,0,.14),0 1px 18px 0 rgba(0,0,0,.12)"></div>
<svg class="i" style="left:1616px;top:659px;width:24px;height:24px;" viewBox="0 0 24 24"><path fill="#000" d="M22.7 19l-9.1-9.1c.9-2.3.4-5-1.5-6.9-2-2-5-2.4-7.4-1.3L9 6 6 9 1.6 4.7C.4 7.1.9 10.1 2.9 12.1c1.9 1.9 4.6 2.4 6.9 1.5l9.1 9.1c.4.4 1 .4 1.4 0l2.3-2.3c.5-.4.5-1.1.1-1.4z"/></svg>
<div class="r" style="left:1483px;top:658px;width:111px;height:26px;background:#fff;border-radius:2px"></div>
<div class="t" style="left:1490.22px;top:666.28px;font-size:10.3px;color:#333;transform:scaleX(0.9521);">Rebuild Phone Config</div>
<div class="r" style="left:1608px;top:707px;width:40px;height:40px;border-radius:50%;background:#fff;box-shadow:0 3px 5px -1px rgba(0,0,0,.2),0 6px 10px 0 rgba(0,0,0,.14),0 1px 18px 0 rgba(0,0,0,.12)"></div>
<svg class="i" style="left:1616px;top:715px;width:24px;height:24px;" viewBox="0 0 24 24"><path fill="#000" d="M17.65 6.35C16.2 4.9 14.21 4 12 4c-4.42 0-7.99 3.58-7.99 8s3.57 8 7.99 8c3.73 0 6.84-2.55 7.73-6h-2.08c-.82 2.33-3.04 4-5.65 4-3.31 0-6-2.69-6-6s2.69-6 6-6c1.66 0 3.14.69 4.22 1.78L13 11h7V4l-2.35 2.35z"/></svg>
<div class="r" style="left:1553px;top:714px;width:41px;height:26px;background:#fff;border-radius:2px"></div>
<div class="t" style="left:1560.23px;top:722.28px;font-size:10.3px;color:#333;transform:scaleX(0.9305);">Reset</div>
<div class="r" style="left:1608px;top:763px;width:40px;height:40px;border-radius:50%;background:#fff;box-shadow:0 3px 5px -1px rgba(0,0,0,.2),0 6px 10px 0 rgba(0,0,0,.14),0 1px 18px 0 rgba(0,0,0,.12)"></div>
<svg class="i" style="left:1616px;top:771px;width:24px;height:24px;" viewBox="0 0 24 24"><path fill="#000" d="M18 8h-1V6c0-2.76-2.24-5-5-5S7 3.24 7 6v2H6c-1.1 0-2 .9-2 2v10c0 1.1.9 2 2 2h12c1.1 0 2-.9 2-2V10c0-1.1-.9-2-2-2zm-6 9c-1.1 0-2-.9-2-2s.9-2 2-2 2 .9 2 2-.9 2-2 2zm3.1-9H8.9V6c0-1.71 1.39-3.1 3.1-3.1 1.71 0 3.1 1.39 3.1 3.1v2z"/></svg>
<div class="r" style="left:1470px;top:770px;width:124px;height:26px;background:#fff;border-radius:2px"></div>
<div class="t" style="left:1477.51px;top:778.28px;font-size:10.3px;color:#333;transform:scaleX(0.9483);">Change User Passwords</div>
<div class="r" style="left:1600px;top:827px;width:56px;height:56px;border-radius:50%;background:#f08300;box-shadow:0 3px 5px -1px rgba(0,0,0,.2),0 6px 10px 0 rgba(0,0,0,.14),0 1px 18px 0 rgba(0,0,0,.12)"></div>
<svg class="i" style="left:1616px;top:843px;width:24px;height:24px;" viewBox="0 0 24 24"><path fill="#fff" d="M19 6.41L17.59 5 12 10.59 6.41 5 5 6.41 10.59 12 5 17.59 6.41 19 12 13.41 17.59 19 19 17.59 13.41 12z"/></svg>
</body></html>
